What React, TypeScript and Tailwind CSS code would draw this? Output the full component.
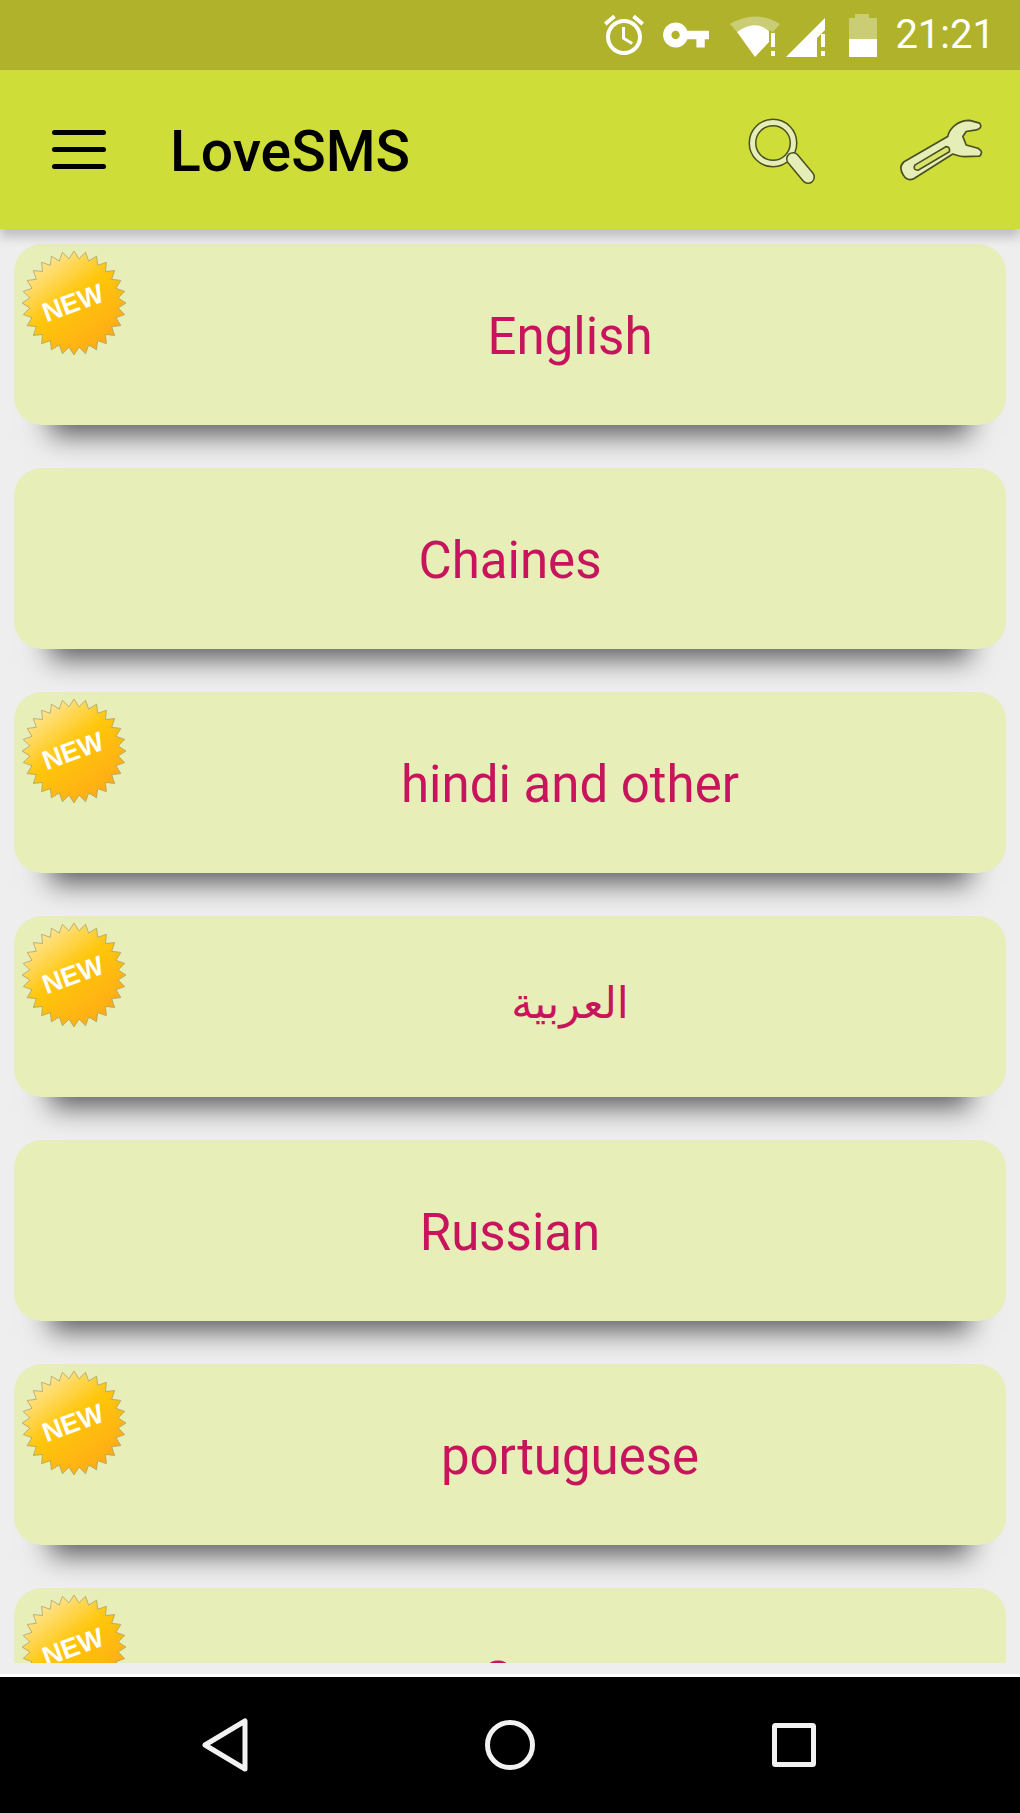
import React from "react";

const starPoints = (() => {
  const pts: string[] = [];
  const n = 28;
  for (let i = 0; i < n * 2; i++) {
    const r = i % 2 === 0 ? 52 : 44.5;
    const a = (Math.PI * i) / n - Math.PI / 2;
    pts.push(`${(54 + r * Math.cos(a)).toFixed(2)},${(54 + r * Math.sin(a)).toFixed(2)}`);
  }
  return pts.join(" ");
})();

function Badge({ id }: { id: string }) {
  return (
    <svg className="absolute left-[6px] top-[5px]" width="108" height="108" viewBox="0 0 108 108">
      <defs>
        <linearGradient id={id} x1="0.15" y1="0.05" x2="0.85" y2="0.95">
          <stop offset="0" stopColor="#ffe9a8" />
          <stop offset="0.45" stopColor="#ffc60a" />
          <stop offset="1" stopColor="#ffa818" />
        </linearGradient>
      </defs>
      <polygon points={starPoints} fill={`url(#${id})`} stroke="#a39a6a" strokeOpacity="0.7" strokeWidth="1" strokeLinejoin="round" />
      <text
        x="53"
        y="63"
        textAnchor="middle"
        fill="#ffffff"
        fontSize="27"
        fontWeight="700"
        fontFamily="Liberation Sans, sans-serif"
        transform="rotate(-20 53 54)"
      >
        NEW
      </text>
    </svg>
  );
}

function Card({ label, isNew, id, arabic }: { label: string; isNew?: boolean; id: string; arabic?: boolean }) {
  return (
    <div className="relative h-[181px] shrink-0 rounded-[28px] bg-[#e7eeb8] shadow-[0_46px_26px_-36px_rgba(0,0,0,0.62)]">
      {isNew && <Badge id={id} />}
      <div className={`flex h-full items-center justify-center pt-[4px] ${isNew ? "pl-[120px]" : ""}`}>
        <span
          className={
            arabic
              ? "pb-[10px] font-['DejaVu_Sans',sans-serif] text-[43px] leading-none text-[#c7145c]"
              : "font-['Roboto',sans-serif] text-[51px] leading-none text-[#c7145c]"
          }
        >
          {label}
        </span>
      </div>
    </div>
  );
}

function StatusIcons() {
  return (
    <div className="flex items-center">
      <svg width="48" height="48" viewBox="0 0 24 24" fill="#ffffff" className="mr-[13px]">
        <path d="M22 5.72l-4.6-3.86-1.29 1.53 4.6 3.86L22 5.72zM7.88 3.39L6.6 1.86 2 5.71l1.29 1.53 4.59-3.85zM12.5 8H11v6l4.75 2.85.75-1.23-4-2.37V8zM12 4c-4.97 0-9 4.03-9 9s4.03 9 9 9 9-4.03 9-9-4.03-9-9-9zm0 16c-3.87 0-7-3.13-7-7s3.13-7 7-7 7 3.13 7 7-3.13 7-7 7z" />
      </svg>
      <svg width="50" height="50" viewBox="0 0 24 24" fill="#ffffff" className="mr-[19px]">
        <path d="M12.65 10C11.83 7.67 9.61 6 7 6c-3.31 0-6 2.69-6 6s2.69 6 6 6c2.61 0 4.83-1.67 5.65-4H17v4h4v-4h2v-4H12.65zM7 14c-1.1 0-2-.9-2-2s.9-2 2-2 2 .9 2 2-.9 2-2 2z" />
      </svg>
      <svg width="100" height="44" viewBox="0 0 100 44" fill="#ffffff" className="mr-[19px]">
        <path d="M0 11 Q25 -4 50 11 L43 19 Q25 9 7 19 Z" opacity="0.35" />
        <path d="M7 19 Q25 6 39 18 L39 29 L25 44 Z" />
        <rect x="41" y="20" width="4" height="14" />
        <rect x="41" y="38" width="4" height="5" />
        <path d="M56 44 L95 5 L95 17 L87 25 L87 44 Z" />
        <rect x="91" y="21" width="4" height="13" />
        <rect x="91" y="38" width="4" height="5" />
      </svg>
      <svg width="28" height="43" viewBox="0 0 28 43" fill="#ffffff" className="mr-[18px]">
        <path d="M6 0 H20 V4 H28 V25 H0 V4 H6 Z" opacity="0.35" />
        <rect x="0" y="25" width="28" height="18" />
      </svg>
      <span className="font-['Roboto',sans-serif] text-[40px] leading-none text-white">21:21</span>
    </div>
  );
}

function SearchIcon() {
  return (
    <svg width="68" height="68" viewBox="748 116 68 68" className="mt-[3px]">
      <circle cx="773" cy="142" r="20.5" fill="none" stroke="#4a4f20" strokeWidth="8" />
      <circle cx="773" cy="142" r="20.5" fill="none" stroke="#e6eeb8" strokeWidth="5" />
      <line x1="793" y1="158" x2="808" y2="176" stroke="#4a4f20" strokeWidth="14" strokeLinecap="round" />
      <line x1="793" y1="158" x2="808" y2="176" stroke="#e6eeb8" strokeWidth="11" strokeLinecap="round" />
    </svg>
  );
}

function WrenchIcon() {
  return (
    <svg width="86" height="64" viewBox="1012 358 256 190">
      <path
        d="M1030 485 L1160 410 C1165 385 1190 362 1225 362 L1255 370 Q1265 385 1245 390 L1215 395 L1205 410 L1215 435 L1250 445 Q1268 455 1255 468 L1210 470 C1195 470 1185 465 1175 462 L1060 535 Q1040 545 1028 525 Q1012 500 1030 485 Z"
        fill="#e6eeb8"
        stroke="#4a4f20"
        strokeWidth="5"
        strokeLinejoin="round"
      />
      <path
        d="M1062 495 L1155 440 Q1168 440 1165 455 L1072 510 Q1055 510 1062 495 Z"
        fill="#d8e36a"
        stroke="#4a4f20"
        strokeWidth="5"
      />
    </svg>
  );
}

export default function App() {
  const rows = [
    { label: "English", isNew: true },
    { label: "Chaines" },
    { label: "hindi and other", isNew: true },
    { label: "العربية", isNew: true, arabic: true },
    { label: "Russian" },
    { label: "portuguese", isNew: true },
    { label: "German", isNew: true },
  ];
  return (
    <div className="flex h-[1813px] w-[1020px] flex-col overflow-hidden bg-[#eeeeee]">
      <div className="flex h-[70px] shrink-0 items-center justify-end bg-[#b0b22c] pr-[25px]">
        <StatusIcons />
      </div>
      <div className="relative z-10 flex h-[159px] shrink-0 items-center bg-[#cedd37] shadow-[0_8px_10px_rgba(0,0,0,0.2)]">
        <div className="ml-[52px] flex w-[54px] flex-col gap-[12px]">
          <div className="h-[5px] rounded-sm bg-black" />
          <div className="h-[5px] rounded-sm bg-black" />
          <div className="h-[5px] rounded-sm bg-black" />
        </div>
        <div className="ml-[64px] mt-[3px] font-['Roboto',sans-serif] text-[57px] font-medium leading-none text-black">LoveSMS</div>
        <div className="flex-1" />
        <SearchIcon />
        <div className="ml-[82px] mr-[36px] mt-[2px]">
          <WrenchIcon />
        </div>
      </div>
      <div className="h-[1434px] shrink-0 overflow-hidden px-[14px] pt-[15px]">
        <div className="flex flex-col gap-[43px]">
          {rows.map((r, i) => (
            <Card key={i} id={`g${i}`} label={r.label} isNew={r.isNew} arabic={r.arabic} />
          ))}
        </div>
      </div>
      <div className="h-[11px] shrink-0" />
      <div className="h-[3px] shrink-0 bg-white" />
      <div className="flex flex-1 items-center justify-center bg-black">
        <div className="flex items-center gap-[237px] pr-[3px]">
          <svg width="46" height="54" viewBox="0 0 46 54" fill="none" stroke="#f2f2f2" strokeWidth="5" strokeLinejoin="round">
            <path d="M43 3 V51 L3 27 Z" />
          </svg>
          <svg width="50" height="50" viewBox="0 0 50 50" fill="none" stroke="#f2f2f2" strokeWidth="5">
            <circle cx="25" cy="25" r="22.5" />
          </svg>
          <svg width="44" height="44" viewBox="0 0 44 44" fill="none" stroke="#f2f2f2" strokeWidth="5" strokeLinejoin="round">
            <rect x="2.5" y="2.5" width="39" height="39" rx="1" />
          </svg>
        </div>
      </div>
    </div>
  );
}
